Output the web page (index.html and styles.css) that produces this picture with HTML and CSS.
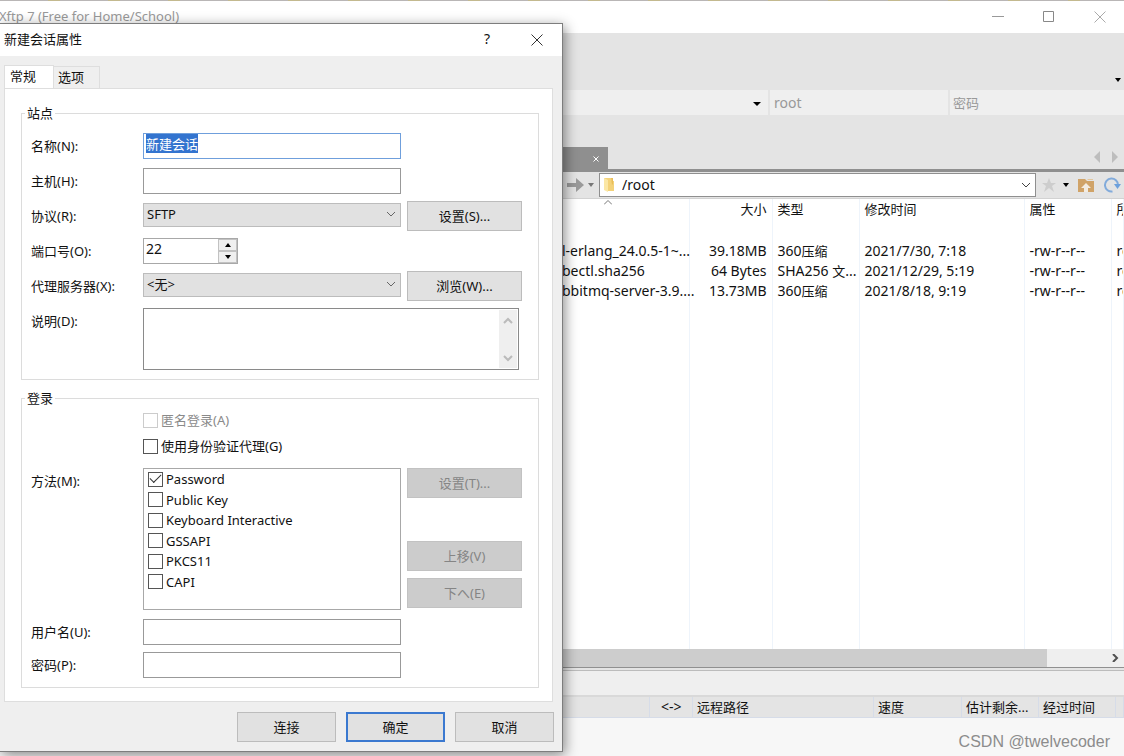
FILE: index.html
```html
<!DOCTYPE html>
<html lang="zh-CN">
<head>
<meta charset="utf-8">
<title>Xftp 7</title>
<link rel="stylesheet" href="styles.css">
</head>
<body>
<main class="app">
  <div class="desktop-edge"></div>
  <header class="titlebar">
    <span class="app-title">Xftp 7 (Free for Home/School)</span>
    <div class="window-controls">
      <button class="icon-btn" aria-label="最小化"><svg width="12" height="12" viewBox="0 0 12 12"><path d="M0 5.500H12" stroke="#999" fill="none"/></svg></button>
      <button class="icon-btn" aria-label="最大化"><svg width="12" height="12" viewBox="0 0 12 12"><path d="M.5.5h10v10H.5z" stroke="#888" fill="none"/></svg></button>
      <button class="icon-btn" aria-label="关闭窗口"><svg width="12" height="12" viewBox="0 0 12 12"><path d="M.5.5l11 11M11.500.5l-11 11" stroke="#aaa" fill="none"/></svg></button>
    </div>
  </header>
  <div class="toolbar"><button class="icon-btn" aria-label="更多工具"><svg width="6" height="4" viewBox="0 0 6 4"><path d="M0 0h6L3 4z"/></svg></button></div>
  <div class="login-bar">
    <div class="login-host"><button class="icon-btn" aria-label="主机列表"><svg width="8" height="4" viewBox="0 0 8 4"><path d="M0 0h8L4 4z"/></svg></button></div>
    <input class="login-input login-user" aria-label="用户" placeholder="root">
    <input class="login-input login-pass" aria-label="登录密码" placeholder="密码">
  </div>
  <div class="tab-strip">
    <div class="file-tab"><button class="icon-btn" aria-label="关闭标签"><svg width="6" height="6" viewBox="0 0 6 6"><path d="M.5.5l5 5M5.500.5l-5 5" stroke="#fff" fill="none"/></svg></button></div>
    <div class="tab-arrows">
      <button class="icon-btn" aria-label="上一个"><svg width="6" height="12" viewBox="0 0 6 12"><path d="M6 0v12L0 6z" fill="#bdbdbd"/></svg></button>
      <button class="icon-btn" aria-label="下一个"><svg width="6" height="12" viewBox="0 0 6 12"><path d="M0 0v12l6-6z" fill="#bdbdbd"/></svg></button>
    </div>
  </div>
  <section class="remote">
    <div class="path-bar">
      <button class="icon-btn" aria-label="前进"><svg width="17" height="14" viewBox="0 0 17 14"><path d="M0 5h9V0l8 7-8 7V9H0z" fill="#9a9a9a"/></svg></button>
      <button class="icon-btn" aria-label="历史"><svg width="6" height="4" viewBox="0 0 6 4"><path d="M0 0h6L3 4z" fill="#777"/></svg></button>
      <div class="path-box">
        <svg width="12" height="16" viewBox="0 0 12 16"><path d="M1 1h7l1 3h2v10H3z" fill="#f3d27a"/><path d="M1 1l4 2v12l-4-2z" fill="#fbe7a5"/><path d="M8 1h2v6l-1 1z" fill="#e9bd58"/></svg>
        <input class="path-input" aria-label="路径" value="/root">
        <button class="icon-btn" aria-label="展开路径"><svg width="8" height="6" viewBox="0 0 8 6"><path d="M0 1l4 4 4-4" stroke="#444" fill="none"/></svg></button>
      </div>
      <div class="path-tools">
        <button class="icon-btn" aria-label="收藏"><svg width="14" height="14" viewBox="0 0 14 14"><path d="M7 0l2 5h5l-4 3 2 6-5-4-5 4 2-6-4-3h5z" fill="#cdcdcd"/></svg></button>
        <button class="icon-btn" aria-label="收藏列表"><svg width="6" height="4" viewBox="0 0 6 4"><path d="M0 0h6L3 4z"/></svg></button>
        <button class="icon-btn" aria-label="上级目录"><svg width="16" height="14" viewBox="0 0 16 14"><path d="M0 1h7l2 2h7v11H0z" fill="#d0a368"/><path d="M9 1h6v1h-5z" fill="#e2c79f"/><path d="M8 5l5 5h-3v4H6v-4H3z" fill="#f3ece2"/></svg></button>
        <button class="icon-btn" aria-label="刷新"><svg width="17" height="16" viewBox="0 0 17 16"><path d="M8.500 14.500A6.500 6.500 0 1 1 14 8" stroke="#82abdb" stroke-width="2" fill="none"/><path d="M10 7h7l-3.500 5z" fill="#6ea1dc"/></svg></button>
      </div>
    </div>
    <div class="listing">
      <svg class="sort-mark" width="8" height="5" viewBox="0 0 8 5"><path d="M0 4.500l4-4 4 4" stroke="#777" fill="none"/></svg>
      <table class="files">
        <colgroup><col class="c-name"><col class="c-size"><col class="c-type"><col class="c-time"><col class="c-attr"><col></colgroup>
        <thead><tr><th></th><th class="num">大小</th><th>类型</th><th>修改时间</th><th>属性</th><th>所有者</th></tr></thead>
        <tbody>
          <tr class="spacer"><td></td><td></td><td></td><td></td><td></td><td></td></tr>
          <tr><td class="name">l-erlang_24.0.5-1~...</td><td class="num">39.18MB</td><td>360<span class="cjk">压缩</span></td><td>2021/7/30, 7:18</td><td>-rw-r--r--</td><td>root</td></tr>
          <tr><td class="name">bectl.sha256</td><td class="num">64 Bytes</td><td>SHA256 <span class="cjk">文</span>...</td><td>2021/12/29, 5:19</td><td>-rw-r--r--</td><td>root</td></tr>
          <tr><td class="name">bbitmq-server-3.9....</td><td class="num">13.73MB</td><td>360<span class="cjk">压缩</span></td><td>2021/8/18, 9:19</td><td>-rw-r--r--</td><td>root</td></tr>
          <tr class="filler"><td></td><td></td><td></td><td></td><td></td><td></td></tr>
        </tbody>
      </table>
    </div>
    <div class="h-scroll"><div class="h-thumb"></div><button class="icon-btn" aria-label="向右滚动"><svg width="7" height="8" viewBox="0 0 7 8"><path d="M1 0l4 4-4 4" stroke="#505050" stroke-width="2" fill="none"/></svg></button></div>
  </section>
  <section class="transfer">
    <div class="transfer-tabs"></div>
    <div class="transfer-head">
      <span class="t-local"></span><span class="t-dir">&lt;-&gt;</span><span class="t-remote">远程路径</span><span class="t-speed">速度</span><span class="t-left">估计剩余...</span><span class="t-time">经过时间</span><span class="t-end"></span>
    </div>
    <div class="transfer-body"><span class="watermark">CSDN @twelvecoder</span></div>
  </section>
</main>

<form class="dialog" role="dialog" aria-label="新建会话属性">
  <header class="dialog-title">
    <span class="dialog-name">新建会话属性</span>
    <div class="dialog-controls">
      <button type="button" class="icon-btn help" aria-label="帮助">?</button>
      <button type="button" class="icon-btn" aria-label="关闭"><svg width="12" height="12" viewBox="0 0 12 12"><path d="M.5.5l11 11M11.500.5l-11 11" stroke="#333" fill="none"/></svg></button>
    </div>
  </header>
  <div class="dialog-body">
    <nav class="tabs"><button type="button" class="tab active">常规</button><button type="button" class="tab">选项</button></nav>
    <div class="panel">
      <fieldset class="group">
        <legend>站点</legend>
        <div class="site-grid">
          <label for="name">名称(N):</label><input id="name" class="text focused" value="新建会话">
          <label class="first" for="host">主机(H):</label><input id="host" class="text">
          <label class="first" for="protocol">协议(R):</label>
          <div class="combo"><select id="protocol"><option>SFTP</option></select><svg width="10" height="6" viewBox="0 0 10 6"><path d="M1 1l4 4 4-4" stroke="#666" fill="none"/></svg></div>
          <button type="button" class="btn">设置(S)...</button>
          <label class="first" for="port">端口号(O):</label>
          <div class="spin"><input id="port" value="22"><div class="steps"><button type="button" aria-label="增加"><svg width="6" height="4" viewBox="0 0 6 4"><path d="M0 4h6L3 0z"/></svg></button><button type="button" aria-label="减少"><svg width="6" height="4" viewBox="0 0 6 4"><path d="M0 0h6L3 4z"/></svg></button></div></div>
          <label class="first" for="proxy">代理服务器(X):</label>
          <div class="combo"><select id="proxy"><option>&lt;无&gt;</option></select><svg width="10" height="6" viewBox="0 0 10 6"><path d="M1 1l4 4 4-4" stroke="#666" fill="none"/></svg></div>
          <button type="button" class="btn">浏览(W)...</button>
          <label class="first note-label" for="note">说明(D):</label>
          <div class="note"><textarea id="note"></textarea><div class="v-scroll"><svg width="10" height="7" viewBox="0 0 10 7"><path d="M1 6l4-4 4 4" stroke="#bbb" stroke-width="2" fill="none"/></svg><svg width="10" height="7" viewBox="0 0 10 7"><path d="M1 1l4 4 4-4" stroke="#bbb" stroke-width="2" fill="none"/></svg></div></div>
        </div>
      </fieldset>
      <fieldset class="group">
        <legend>登录</legend>
        <div class="login-checks">
          <label class="check off"><input type="checkbox" disabled>匿名登录(A)</label>
          <label class="check"><input type="checkbox">使用身份验证代理(G)</label>
        </div>
        <div class="method">
          <span class="method-label" id="method-label">方法(M):</span>
          <div class="method-list" role="group" aria-labelledby="method-label">
            <label class="check"><input type="checkbox" checked>Password</label>
            <label class="check"><input type="checkbox">Public Key</label>
            <label class="check"><input type="checkbox">Keyboard Interactive</label>
            <label class="check"><input type="checkbox">GSSAPI</label>
            <label class="check"><input type="checkbox">PKCS11</label>
            <label class="check"><input type="checkbox">CAPI</label>
          </div>
          <div class="method-buttons">
            <button type="button" class="btn first-btn" disabled>设置(T)...</button>
            <button type="button" class="btn" disabled>上移(V)</button>
            <button type="button" class="btn" disabled>下へ(E)</button>
          </div>
        </div>
        <div class="credentials">
          <label for="user">用户名(U):</label><input id="user" class="text">
          <label for="pass">密码(P):</label><input id="pass" class="text" type="password">
        </div>
      </fieldset>
    </div>
    <footer class="actions">
      <button type="button" class="btn">连接</button>
      <button type="button" class="btn default">确定</button>
      <button type="button" class="btn">取消</button>
    </footer>
  </div>
</form>
<script src="main.js"></script>
</body>
</html>
```
FILE: main.js
```js
const nameField = document.getElementById('name');
nameField.focus();
nameField.select();
```
FILE: styles.css
```css
* { box-sizing: border-box; }
body {
  margin: 0;
  font: 13px/18px "Noto Sans", "Noto Sans CJK SC", sans-serif;
  color: #111;
}
button, input, select, textarea { font: inherit; color: inherit; margin: 0; border-radius: 0; outline: none; }
svg { display: block; }
.icon-btn { display: grid; place-items: center; padding: 0; border: 0; background: none; }

/* main window */
.app { display: flex; flex-direction: column; min-height: 100vh; overflow: hidden; background: #e4e4e4; }
.desktop-edge { height: 1px; background: repeating-linear-gradient(90deg, #b9b6b6 0 48px, #c3b98f 48px 60px); }
.titlebar { display: flex; justify-content: space-between; height: 32px; background: #fff; }
.app-title { margin-left: -1px; padding-top: 6px; color: #999; }
.window-controls { display: flex; gap: 39px; align-items: center; padding-right: 18px; }
.toolbar { display: flex; justify-content: flex-end; align-items: flex-end; height: 57px; padding: 0 3px 8px; }
.login-bar { display: grid; grid-template-columns: 206fr 178fr 174fr; gap: 2px; height: 25px; margin-left: 50%; }
.login-host { display: flex; justify-content: flex-end; padding: 2px 7px 0 0; background: #efefef; }
.login-input { min-width: 0; width: 100%; border: 0; padding: 0 4px; background: #efefef; font-size: 14px; }
.login-input::placeholder { color: #999; opacity: 1; }
.login-pass { padding-left: 3px; font-size: 13px; }
.tab-strip { display: flex; justify-content: space-between; margin-left: 50%; height: 57px; padding-top: 32px; border-bottom: 3px solid #8f8f8f; }
.file-tab { display: flex; justify-content: flex-end; width: 46px; padding: 2px 9px 0; background: #8f8f8f; }
.tab-arrows { display: flex; gap: 12px; padding: 0 6px 2px; }

.remote { display: flex; flex-direction: column; flex: 1; margin-left: 50%; border-bottom: 1px solid #909090; background: #fff; }
.path-bar { display: flex; align-items: center; height: 27px; padding: 0 3px 0 5px; background: #e4e4e4; border-bottom: 1px solid #d2d2d2; }
.path-bar > .icon-btn { margin-right: 4px; }
.path-box { display: flex; flex: 1; align-items: center; height: 24px; margin-left: 1px; padding: 0 5px 0 3px; border: 1px solid #8f8f8f; background: #fff; }
.path-input { flex: 1; min-width: 0; border: 0; padding: 0 7px; font-size: 14px; }
.path-tools { display: flex; align-items: center; gap: 7px; padding-left: 6px; }
.path-tools .icon-btn:nth-child(2) { margin-right: 2px; }
.path-tools .icon-btn:last-child { margin-left: 3px; }
.listing { position: relative; display: flex; flex: 1; }
.sort-mark { position: absolute; left: 42px; top: 1px; }
.files { width: 100%; table-layout: fixed; border-collapse: collapse; font-size: 14px; line-height: 20px; }
.c-name { width: 127px; }
.c-size { width: 83px; }
.c-type { width: 87px; }
.c-time { width: 165px; }
.c-attr { width: 87px; }
.files th, .files td { padding: 0 0 0 5px; border-right: 1px solid #eef4fb; text-align: left; font-weight: 400; white-space: nowrap; overflow: hidden; }
.files th { height: 22px; padding-bottom: 2px; font-size: 13px; }
.files td { height: 20px; }
.files .num { text-align: right; padding-left: 0; padding-right: 5px; }
.files .name { padding: 0; overflow: visible; }
.files .spacer td { height: 20px; }
.files .filler td { height: auto; }
.cjk { font-size: 13px; }
.h-scroll { display: flex; justify-content: space-between; height: 18px; padding-right: 5px; background: #efefef; }
.h-thumb { width: 87%; background: #cdcdcd; }

.transfer { margin-top: 2px; border-top: 1px solid #bcbcbc; }
.transfer-tabs { height: 26px; background: #efefef; border-bottom: 2px solid #d9d9d9; }
.transfer-head { display: flex; height: 21px; margin-left: 50%; border-bottom: 1px solid #d6dce8; }
.transfer-head span { overflow: hidden; white-space: nowrap; padding-left: 4px; border-right: 1px solid #d6dce8; line-height: 20px; }
.t-local { width: 88px; }
.transfer-head .t-dir { width: 43px; padding-left: 11px; font-size: 14px; }
.t-remote { flex: 1; }
.t-speed { width: 88px; }
.t-left { width: 77px; }
.t-time { width: 77px; }
.t-end { width: 8px; }
.transfer-body { display: flex; justify-content: flex-end; height: 38px; padding: 15px 14px 0; background: #f7f7f7; }
.watermark { font: 16px/18px "Liberation Sans", sans-serif; color: #8c8c8c; }

/* session dialog */
.dialog {
  position: absolute; left: 0; top: 23px; width: calc(50% + 1px);
  border: 1px solid #7d7d7d; border-left: 0;
  background: #efefef;
  box-shadow: 2px 3px 12px rgba(0, 0, 0, .45);
}
.dialog-title { display: flex; justify-content: space-between; align-items: center; height: 32px; padding: 0 19px 0 4px; background: #fff; }
.dialog-name { padding-bottom: 2px; }
.dialog-controls { display: flex; align-items: center; gap: 41px; }
.help { padding-bottom: 2px; font-size: 14px; }
.dialog-body { padding: 9px 8px 9px 4px; }
.tabs { display: flex; align-items: flex-end; }
.tab { height: 22px; width: 46px; padding: 0 0 1px 4px; border: 1px solid #dedede; border-width: 1px 1px 0 0; background: #efefef; text-align: left; }
.tab.active { height: 23px; width: 50px; padding: 0 0 2px 5px; border-left-width: 1px; background: #fff; }
.panel { margin-right: 1px; padding: 15px 13px 13px 16px; border: 1px solid #dedede; background: #fff; }
.group { min-width: 0; margin: 0; padding: 0 16px 9px 9px; border: 1px solid #dcdcdc; }
.group + .group { margin-top: 9px; }
.group legend { margin-left: -6px; padding: 0 2px; }
.site-grid, .method, .credentials { display: grid; grid-template-columns: 112px 1fr 121px; }
.site-grid { grid-template-rows: repeat(5, 35px) 67px; align-items: center; padding-top: 6px; }
.site-grid .first { grid-column: 1; }
.site-grid .btn { margin-left: 6px; }
.text { width: 100%; height: 26px; border: 1px solid #999; padding: 1px 2px 5px; background: #fff; }
.focused { border-color: #6f9fdc; }
.focused::selection { background: #3374cf; color: #fff; }
.combo { position: relative; margin-bottom: 2px; }
.combo select { display: block; appearance: none; width: 100%; height: 24px; padding: 0 3px 1px; border: 1px solid #bcbcbc; background: #e1e1e1; }
.combo svg { position: absolute; right: 5px; top: 8px; pointer-events: none; }
.btn { height: 30px; padding: 0; border: 1px solid #bcbcbc; background: #e1e1e1; text-align: center; }
.btn:disabled { background: #ccc; border-color: #c2c2c2; color: #858585; }
.spin { display: flex; width: 95px; height: 26px; border: 1px solid #a8a8a8; background: #fff; }
.spin input { flex: 1; min-width: 0; border: 0; padding: 0 2px 4px; background: none; font-size: 14px; }
.steps { display: grid; grid-template-rows: 1fr 1fr; width: 19px; }
.steps button { display: grid; place-items: center; padding: 0; border: 1px solid #c2c2c2; background: #efefef; }
.note { grid-column: 2 / 4; display: flex; height: 62px; margin: 5px 3px 0 0; padding: 1px; border: 1px solid #8a8a8a; align-self: start; }
.note textarea { flex: 1; min-width: 0; padding: 2px; border: 0; resize: none; }
.v-scroll { display: flex; flex-direction: column; justify-content: space-between; align-items: center; width: 18px; padding: 7px 0 6px; background: #efefef; }
.note-label { align-self: start; padding-top: 9px; }
.login-checks { display: grid; grid-auto-rows: 26px; padding-left: 112px; }
.check { display: flex; align-items: center; gap: 3px; }
.off { color: #8a8a8a; }
.check input { display: grid; place-items: center; appearance: none; width: 15px; height: 15px; border: 1px solid #555; background: #fff; }
.check input:disabled { border-color: #ccc; }
.check input:checked::after { content: ""; width: 10px; height: 5px; border: solid #333; border-width: 0 0 1px 1px; transform: translateY(-2px) rotate(-45deg); }
.method { margin-top: 9px; }
.method-label { padding-top: 4px; }
.method-list { display: grid; grid-template-rows: repeat(6, 1fr); height: 142px; padding: 0 4px 17px; border: 1px solid #a8a8a8; }
.method-buttons { display: flex; flex-direction: column; gap: 7px; padding-left: 6px; }
.method-buttons .first-btn { margin-bottom: 36px; }
.credentials { align-items: center; row-gap: 7px; margin-top: 9px; }
.credentials label { grid-column: 1; }
.actions { display: flex; justify-content: flex-end; gap: 10px; padding-top: 10px; }
.actions .btn { width: 99px; }
.actions .default { border: 2px solid #3b79d0; }
```
